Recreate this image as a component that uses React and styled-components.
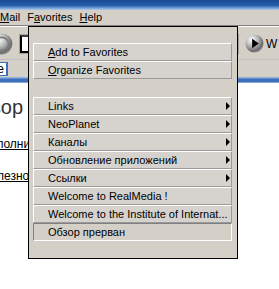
import React from "react";
import styled, { createGlobalStyle, css } from "styled-components";

const GlobalStyle = createGlobalStyle`
  html, body {
    margin: 0;
    padding: 0;
    background: #ffffff;
    overflow: hidden;
  }
`;

const Page = styled.div`
  position: relative;
  width: 279px;
  height: 289px;
  overflow: hidden;
  display: flex;
  flex-direction: column;
  font-family: "Liberation Sans", Arial, sans-serif;
  font-size: 11px;
  color: #000;
`;

const TitleStrip = styled.div`
  height: 10px;
  background: linear-gradient(#1a4a92 0%, #265da8 55%, #6f9fd8 80%, #b4cdeb 100%);
`;

const MenuBar = styled.div`
  height: 15px;
  background: #d4d0c8;
  display: flex;
  align-items: center;
  gap: 7px;
  line-height: 15px;
`;

const MenuTitle = styled.span`
  white-space: nowrap;
  u {
    text-decoration: underline;
  }
`;

const Toolbar = styled.div`
  height: 31px;
  background: #d4d0c8;
  border-top: 1px solid #808080;
  box-shadow: inset 0 1px 0 #ffffff;
  display: flex;
  align-items: center;
  padding-top: 2px;
`;

const ButtonSlot = styled.div`
  display: flex;
  flex: none;
  margin-left: ${(p) => p.$offset}px;
`;

const RoundButton = styled.svg`
  flex: none;
  display: block;
`;

const AddressBox = styled.div`
  flex: none;
  width: 214px;
  height: 14px;
  margin-left: 7px;
  background: #ffffff;
  border: 2px solid #000;
  border-top-color: #404040;
  box-shadow: 0 0 0 1px #a0a0a0;
`;

const GoLabel = styled.span`
  font-size: 12px;
  margin-left: 2px;
`;

const LinksRow = styled.div`
  height: 17px;
  background: #d4d0c8;
  border-top: 1px solid #c0c0c0;
  display: flex;
  align-items: flex-end;
`;

const TabBox = styled.div`
  width: 8px;
  height: 14px;
  background: #ffffff;
  border: 1px solid #3d6fba;
  border-left: none;
  border-right-width: 2px;
  display: flex;
  align-items: center;
  justify-content: flex-end;
  overflow: hidden;
  font-size: 12px;
  padding-right: 2px;
  box-sizing: border-box;
  margin-bottom: 1px;
`;

const BlueStrip = styled.div`
  height: 6px;
  background: linear-gradient(#a8c2e6 0%, #3d6fba 40%, #3d6fba 80%, #bcd0ee 100%);
`;

const Content = styled.div`
  flex: 1;
  background: #ffffff;
  display: flex;
  flex-direction: column;
  padding-top: 11px;
`;

const Heading = styled.div`
  width: 23px;
  height: 26px;
  line-height: 26px;
  margin-bottom: 17px;
  display: flex;
  justify-content: flex-end;
  overflow: hidden;
  white-space: nowrap;
  font-size: 20px;
  color: #333333;
`;

const LinkLine = styled.div`
  width: 28px;
  height: 15px;
  line-height: 15px;
  margin-bottom: 17px;
  overflow: hidden;
  white-space: nowrap;
  font-size: 12px;
  text-decoration: underline;
  text-indent: ${(p) => p.$hide}px;
`;

const FavMenu = styled.div`
  position: absolute;
  left: 28px;
  top: 26px;
  width: 210px;
  height: 233px;
  box-sizing: border-box;
  border: 1px solid #000;
  background: #d4d0c8;
  padding: 16px 5px 17px 4px;
  display: flex;
  flex-direction: column;
`;

const Item = styled.div`
  height: 18px;
  box-sizing: border-box;
  display: flex;
  align-items: center;
  justify-content: space-between;
  padding: 0 1px 0 14px;
  background: #d6d3ce;
  white-space: nowrap;
  border: 1px solid;
  ${(p) =>
    p.$sunken
      ? css`
          border-color: #808080 #ffffff #ffffff #808080;
          background: #d4d0c8;
        `
      : css`
          border-color: #ffffff #9a9a9a #9a9a9a #ffffff;
        `}
  u {
    text-decoration: underline;
  }
`;

const Gap = styled.div`
  height: 18px;
  flex: none;
`;

const Arrow = styled.span`
  width: 0;
  height: 0;
  border-top: 4px solid transparent;
  border-bottom: 4px solid transparent;
  border-left: 4px solid #000;
`;

const Metal = ({ size, arrow }) => {
  const id = arrow ? "goMetal" : "backMetal";
  return (
    <RoundButton width={size} height={size} viewBox="0 0 20 20">
      <defs>
        <radialGradient id={id} cx="35%" cy="30%" r="75%">
          <stop offset="0%" stopColor="#ffffff" />
          <stop offset="45%" stopColor="#b8b8b8" />
          <stop offset="85%" stopColor="#6a6a6a" />
          <stop offset="100%" stopColor="#9a9a9a" />
        </radialGradient>
      </defs>
      <circle cx="10" cy="10" r="9.5" fill={`url(#${id})`} />
      {arrow ? (
        <path d="M7.5 5 L14.5 10 L7.5 15 Z" fill="#000" />
      ) : (
        <circle cx="10" cy="10" r="6" fill="none" stroke="#7a7a7a" strokeWidth="1.5" />
      )}
    </RoundButton>
  );
};

const submenus = [
  "Links",
  "NeoPlanet",
  "Каналы",
  "Обновление приложений",
  "Ссылки",
];

export default function App() {
  return (
    <>
      <GlobalStyle />
      <Page>
        <TitleStrip />
        <MenuBar>
          <MenuTitle>
            <u>M</u>ail
          </MenuTitle>
          <MenuTitle>
            F<u>a</u>vorites
          </MenuTitle>
          <MenuTitle>
            <u>H</u>elp
          </MenuTitle>
        </MenuBar>
        <Toolbar>
          <ButtonSlot $offset={-9}>
            <Metal size={22} />
          </ButtonSlot>
          <AddressBox />
          <ButtonSlot $offset={7}>
            <Metal size={19} arrow />
          </ButtonSlot>
          <GoLabel>W</GoLabel>
        </Toolbar>
        <LinksRow>
          <TabBox>e</TabBox>
        </LinksRow>
        <BlueStrip />
        <Content>
          <Heading>
            <span>Обзор</span>
          </Heading>
          <LinkLine $hide={-18}>Дополнительно</LinkLine>
          <LinkLine $hide={-18}>Полезно</LinkLine>
        </Content>

        <FavMenu>
          <Item>
            <span>
              <u>A</u>dd to Favorites
            </span>
          </Item>
          <Item>
            <span>
              <u>O</u>rganize Favorites
            </span>
          </Item>
          <Gap />
          {submenus.map((name) => (
            <Item key={name}>
              <span>{name}</span>
              <Arrow />
            </Item>
          ))}
          <Item>
            <span>Welcome to RealMedia !</span>
          </Item>
          <Item>
            <span>Welcome to the Institute of Internat...</span>
          </Item>
          <Item $sunken>
            <span>Обзор прерван</span>
          </Item>
        </FavMenu>
      </Page>
    </>
  );
}
